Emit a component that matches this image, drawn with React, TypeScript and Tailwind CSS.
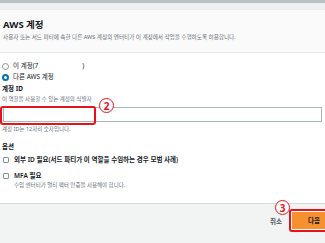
import React from "react";

const font = { fontFamily: '"Noto Sans", "Noto Sans CJK KR", sans-serif' };

function Circled({ n }: { n: string }) {
  return (
    <div className="w-[15px] h-[15px] rounded-full border-[1.5px] border-[#e5141b] bg-white flex items-center justify-center text-[#e5141b] text-[10px] font-bold leading-none">
      {n}
    </div>
  );
}

export default function App() {
  return (
    <div className="w-[325px] h-[243px] overflow-hidden flex flex-col bg-white text-[#16191f]" style={font}>
      <div className="h-[3px] bg-[#b8c0c1]" />
      <div className="h-[7px] bg-[#eeefef]" />
      <div className="h-[43px] bg-[#fafafa] border-b border-[#eaeded] pl-[3px] pt-[8px]">
        <div className="text-[9.5px] font-bold leading-[14px]">AWS 계정</div>
        <div className="mt-[1px] text-[5.6px] leading-[8px] text-[#687078]">
          사용자 또는 서드 파티에 속한 다른 AWS 계정의 엔터티가 이 계정에서 작업을 수행하도록 허용합니다.
        </div>
      </div>
      <div className="relative px-[2px]">
        <div className="mt-[8px] h-[10px] flex items-center gap-[4px] text-[6.5px]">
          <div className="w-[7px] h-[7px] rounded-full border border-[#879596] bg-white" />
          <span className="flex">
            <span>이 계정(7</span>
            <span className="w-[44px]" />
            <span>)</span>
          </span>
        </div>
        <div className="mt-[1px] h-[10px] flex items-center gap-[4px] text-[6.5px]">
          <div className="w-[7px] h-[7px] rounded-full border-[2px] border-[#0073bb] bg-white" />
          <span>다른 AWS 계정</span>
        </div>
        <div className="mt-[2px] h-[10px] flex items-center text-[6.5px] font-bold">계정 ID</div>
        <div className="mt-[1px] h-[8px] flex items-center text-[5.5px] text-[#687078]">
          이 역할을 사용할 수 있는 계정의 식별자
        </div>
        <div className="mt-[4px] h-[15px] ml-[1px] mr-[1px] border border-[#aab7b8] bg-white" />
        <div className="mt-[3px] h-[8px] flex items-center text-[5.5px] text-[#687078]">
          계정 ID는 12자리 숫자입니다.
        </div>
        <div className="mt-[9px] h-[10px] flex items-center text-[6.5px] font-bold">옵션</div>
        <div className="mt-[3px] h-[10px] flex items-center gap-[5px] text-[6.5px] font-semibold">
          <div className="ml-[1px] w-[6px] h-[6px] rounded-[1px] border border-[#879596] bg-white" />
          <span>외부 ID 필요(서드 파티가 이 역할을 수임하는 경우 모범 사례)</span>
        </div>
        <div className="mt-[6px] h-[10px] flex items-center gap-[5px] text-[6.5px] font-semibold">
          <div className="ml-[1px] w-[6px] h-[6px] rounded-[1px] border border-[#879596] bg-white" />
          <span>MFA 필요</span>
        </div>
        <div className="h-[8px] flex items-center pl-[12px] text-[5.5px] text-[#687078]">
          수임 엔터티가 멀티 팩터 인증을 사용해야 합니다.
        </div>
        <div className="absolute left-[0px] top-[53px] w-[96px] h-[19px] border-2 border-[#e5141b] rounded-[3px]" />
        <div className="absolute left-[99px] top-[45px]">
          <Circled n="2" />
        </div>
      </div>
      <div className="mt-[14px] flex-1 border-t border-[#d5dbdb] bg-[#f2f3f3] relative flex justify-end items-start pt-[5px]">
        <span className="mt-[8px] mr-[7px] text-[6.5px] font-bold text-[#545b64]">취소</span>
        <div className="-mr-[14px] border-2 border-[#e5141b] rounded-[3px] p-[1px] bg-white">
          <div className="w-[44px] h-[17px] bg-[#f7902f] flex items-center justify-center text-[6.5px] font-bold text-[#16191f]">
            다음
          </div>
        </div>
        <div className="absolute left-[275px] top-[-4px]">
          <Circled n="3" />
        </div>
      </div>
    </div>
  );
}
